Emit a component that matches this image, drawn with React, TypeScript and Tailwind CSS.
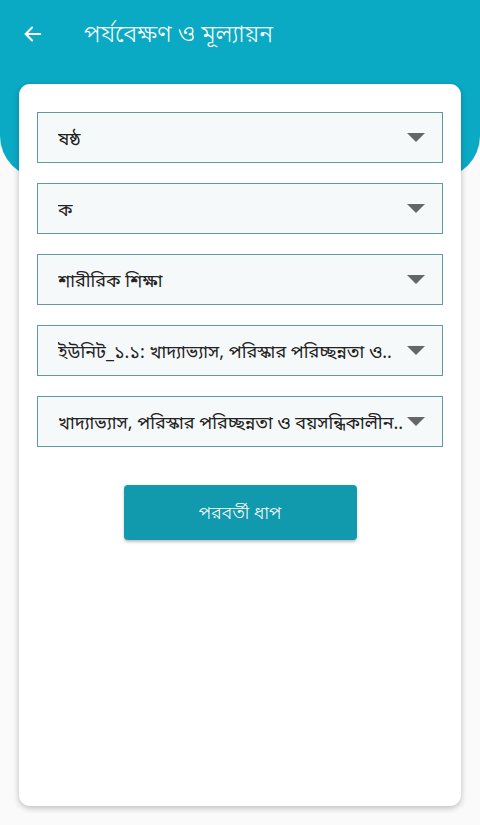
import React from 'react';

function App() {
  const selects = [
    'ষষ্ঠ',
    'ক',
    'শারীরিক শিক্ষা',
    'ইউনিট_১.১: খাদ্যাভ্যাস, পরিস্কার পরিচ্ছন্নতা ও..',
    'খাদ্যাভ্যাস, পরিস্কার পরিচ্ছন্নতা ও বয়সন্ধিকালীন..',
  ];

  return (
    <div
      className="w-[480px] h-[825px] bg-[#fafafa] overflow-hidden"
      style={{ fontFamily: '"Noto Sans Bengali", "Noto Sans", Roboto, sans-serif' }}
    >
      <div className="h-[178px] bg-[#0aaac5] rounded-b-[42px] flex items-start pt-[19px] px-[22px]">
        <div className="flex items-center h-[30px]">
          <svg width="22" height="22" viewBox="0 0 24 24" fill="none" stroke="white" strokeWidth="2.2" strokeLinecap="round" strokeLinejoin="round">
            <path d="M20 12H4" />
            <path d="M11 5l-7 7 7 7" />
          </svg>
          <span className="ml-[40px] pt-[4px] text-white text-[24px] font-light">পর্যবেক্ষণ ও মূল্যায়ন</span>
        </div>
      </div>

      <div className="mx-[19px] -mt-[94px] h-[722px] bg-white rounded-[11px] shadow-[0_2px_6px_rgba(0,0,0,0.25)] px-[18px] pt-[28px]">
        <div className="flex flex-col gap-[20px]">
          {selects.map((s, i) => (
            <div
              key={i}
              className="relative h-[51px] border border-[#5e9c9f] bg-[#f6f9fa] flex items-center pl-[20px] pr-[16px]"
            >
              <span className="pt-[5px] text-[18px] text-[#222] whitespace-nowrap overflow-hidden flex-1">{s}</span>
              <svg className="absolute right-[17px] top-[20px]" width="18" height="9" viewBox="0 0 18 9">
                <path d="M0 0h18L9 9z" fill="#666" />
              </svg>
            </div>
          ))}
        </div>
        <div className="flex justify-center mt-[38px]">
          <button className="w-[233px] h-[55px] bg-[#1199ae] rounded-[4px] text-white text-[18px] font-light pt-[3px] shadow-[0_2px_3px_rgba(0,0,0,0.25)]">
            পরবর্তী ধাপ
          </button>
        </div>
      </div>
    </div>
  );
}

export default App;
